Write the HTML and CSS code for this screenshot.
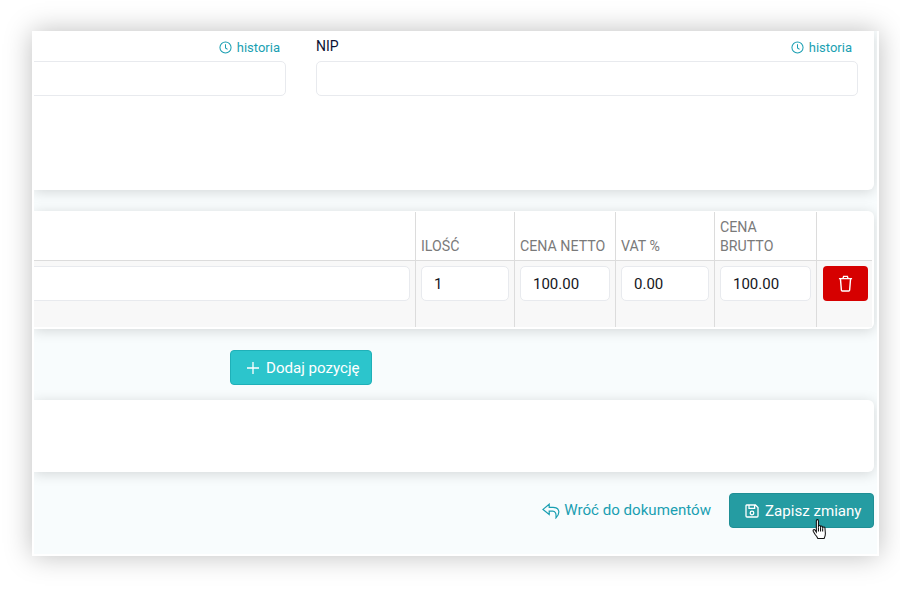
FILE: index.html
```html
<!DOCTYPE html>
<html lang="pl">
<head>
    <meta charset="UTF-8">
    <meta name="viewport" content="width=device-width, initial-scale=1.0">
    <title>Edycja dokumentu</title>
    <link rel="stylesheet" href="styles.css">
</head>
<body>

    <div class="frame">
        <div class="content">

            <!-- Dane kontrahenta -->
            <div class="card card-top">
                <div class="field field-first">
                    <div class="field-head">
                        <span class="field-label"></span>
                        <a class="history-link" href="#">
                            <svg class="history-icon" viewBox="0 0 14 14"><circle cx="7" cy="7" r="6"/><path d="M7 3.4V7.4L9.2 9"/></svg>
                            historia
                        </a>
                    </div>
                    <input class="text-input input-cut" type="text">
                </div>
                <div class="field field-nip">
                    <div class="field-head">
                        <span class="field-label">NIP</span>
                        <a class="history-link" href="#">
                            <svg class="history-icon" viewBox="0 0 14 14"><circle cx="7" cy="7" r="6"/><path d="M7 3.4V7.4L9.2 9"/></svg>
                            historia
                        </a>
                    </div>
                    <input class="text-input" type="text">
                </div>
            </div>

            <!-- Pozycje -->
            <div class="card card-table">
                <table class="items">
                    <colgroup>
                        <col class="col-name">
                        <col class="col-qty">
                        <col class="col-net">
                        <col class="col-vat">
                        <col class="col-gross">
                        <col class="col-action">
                    </colgroup>
                    <thead>
                        <tr>
                            <th></th>
                            <th>Ilość</th>
                            <th>Cena netto</th>
                            <th>VAT %</th>
                            <th>Cena brutto</th>
                            <th></th>
                        </tr>
                    </thead>
                    <tbody>
                        <tr>
                            <td><input class="text-input input-cut" type="text"></td>
                            <td><input class="text-input" type="text" value="1"></td>
                            <td><input class="text-input" type="text" value="100.00"></td>
                            <td><input class="text-input" type="text" value="0.00"></td>
                            <td><input class="text-input" type="text" value="100.00"></td>
                            <td>
                                <button class="btn-delete" aria-label="Usuń">
                                    <svg viewBox="0 0 16 18"><path d="M1 3.8H15M2.6 3.8L3.6 16.2Q3.7 17 4.5 17H11.5Q12.3 17 12.4 16.2L13.4 3.8M5.2 3.8L6 1.4H10L10.8 3.8"/></svg>
                                </button>
                            </td>
                        </tr>
                    </tbody>
                </table>
            </div>

            <div class="add-row">
                <button class="btn btn-add">
                    <svg class="btn-icon" viewBox="0 0 14 14"><path d="M7 1V13M1 7H13"/></svg>
                    Dodaj pozycję
                </button>
            </div>

            <div class="card card-notes"></div>

            <!-- Akcje -->
            <div class="actions">
                <a class="back-link" href="#">
                    <svg class="back-icon" viewBox="0 0 18 16"><path d="M7.2 1.2L1 6.4L7.2 11.4V8.2H10.6Q14.6 8.2 14 14.8Q17.2 11.6 16.8 8.4Q16.2 4.4 11 4.4H7.2Z"/></svg>
                    <span class="back-text">Wróć do dokumentów</span>
                </a>
                <button class="btn btn-save">
                    <svg class="btn-icon" viewBox="0 0 14 14"><path d="M1.6 1H10.4L13 3.6V12Q13 13 12 13H2Q1 13 1 12V1.6Q1 1 1.6 1ZM4 1V4.4H9.6V1"/><circle cx="7" cy="9" r="1.8"/></svg>
                    Zapisz zmiany
                    <svg class="cursor-hand" viewBox="0 0 14 20"><path d="M4 1.6Q4 .6 5 .6T6 1.6V8L6.2 6.6Q6.6 6 7.3 6.2T8 7.2V8.4L8.2 7.2Q8.6 6.6 9.3 6.8T10 7.8V9L10.2 8Q10.6 7.4 11.4 7.6T12.2 8.6L12.6 14Q12.6 16 11.4 18.6H5.4Q4.6 16.6 3 15L1 11.6Q.6 10.6 1.4 10.2T2.8 10.6L4 12.4Z"/><path class="hand-lines" d="M6 8V12M8 8.4V12M10 9V12"/></svg>
                </button>
            </div>

        </div>
    </div>

</body>
</html>
```

FILE: styles.css
```css
/* --- Base --- */
html, body {
    height: 600px;
}

body {
    margin: 0;
    background-color: #fff;
    font-family: 'Roboto', sans-serif;
    overflow: hidden;
}

/* --- Frame --- */
.frame {
    width: 847px;
    height: 525px;
    margin: 31px 0 0 32px;
    box-sizing: border-box;
    border: 2px solid #fff;
    border-top: 0;
    box-shadow: 0 0 26px rgba(0, 0, 0, 0.26);
}

.content {
    height: 100%;
    overflow: hidden;
    background-color: #f8fcfd;
}

/* --- Cards --- */
.card {
    width: 840px;
    box-sizing: border-box;
    background-color: #fff;
    border-radius: 0 6px 6px 0;
    box-shadow: 0 2px 13px rgba(0, 0, 0, 0.15);
}

.card-top {
    display: flex;
    gap: 30px;
    height: 159px;
    padding-right: 16px;
    border-radius: 0 0 6px 0;
}

.card-table {
    margin-top: 21px;
    padding: 1px 2px 2px 0;
}

.card-notes {
    height: 72px;
    margin-top: 15px;
}

/* --- Fields --- */
.field-first {
    width: 252px;
}

.field-nip {
    flex: 1;
}

.field-head {
    display: flex;
    align-items: center;
    justify-content: space-between;
    height: 30px;
    padding-right: 6px;
}

.field-label {
    font-size: 14px;
    color: #0b1233;
}

.history-link {
    display: flex;
    align-items: center;
    gap: 5px;
    font-size: 13px;
    color: #1a9fb2;
    text-decoration: none;
    margin-top: 3px;
}

.history-icon {
    width: 13px;
    height: 13px;
    fill: none;
    stroke: #1a9fb2;
    stroke-width: 1.1;
}

.text-input {
    display: block;
    width: 100%;
    height: 35px;
    box-sizing: border-box;
    padding: 0 12px;
    background-color: #fff;
    border: 1px solid #e8eaee;
    border-radius: 5px;
    font-family: inherit;
    font-size: 15px;
    color: #14161c;
}

/* first column runs off the left edge of the frame */
.input-cut {
    width: calc(100% + 20px);
    margin-left: -20px;
}

/* --- Table --- */
.items {
    width: 838px;
    border-collapse: separate;
    border-spacing: 0;
    table-layout: fixed;
}

.col-name { width: 382px; }
.col-qty { width: 99px; }
.col-net { width: 101px; }
.col-vat { width: 99px; }
.col-gross { width: 102px; }
.col-action { width: 55px; }

.items th {
    height: 49px;
    box-sizing: border-box;
    padding: 5px 5px 4px 5px;
    border-right: 1px solid #dcdcdc;
    border-bottom: 1px solid #dcdcdc;
    vertical-align: bottom;
    text-align: left;
    font-size: 14.2px;
    font-weight: 400;
    line-height: 19px;
    text-transform: uppercase;
    color: #7a7a7a;
}

.items td {
    height: 66px;
    box-sizing: border-box;
    padding: 5px;
    background-color: #f8f8f8;
    border-right: 1px solid #dcdcdc;
    vertical-align: top;
}

.items th:last-child,
.items td:last-child {
    border-right: 0;
}

.items td:last-child {
    padding-left: 6px;
}

.btn-delete {
    display: flex;
    align-items: center;
    justify-content: center;
    width: 45px;
    height: 35px;
    padding: 0;
    background-color: #d60000;
    border: 0;
    border-radius: 4px;
}

.btn-delete svg {
    width: 15px;
    height: 17px;
    fill: none;
    stroke: #fff;
    stroke-width: 1.5;
}

/* --- Buttons --- */
.btn {
    display: flex;
    align-items: center;
    height: 35px;
    box-sizing: border-box;
    padding-bottom: 1px;
    border-radius: 4px;
    font-family: inherit;
    font-size: 15.1px;
    font-weight: 400;
    color: #fff;
}

.btn-icon {
    width: 14px;
    height: 14px;
    fill: none;
    stroke: #fff;
    stroke-width: 1.3;
}

.add-row {
    padding: 21px 0 0 196px;
}

.btn-add {
    width: 142px;
    padding-left: 15px;
    gap: 6px;
    background-color: #2cc5cc;
    border: 1px solid #1fb0b8;
}

.btn-save {
    position: relative;
    width: 145px;
    padding-left: 15px;
    gap: 6px;
    background-color: #259ca2;
    border: 1px solid #1f8f95;
}

/* --- Footer actions --- */
.actions {
    display: flex;
    align-items: center;
    justify-content: flex-end;
    gap: 18px;
    padding: 21px 3px 0 0;
}

.back-link {
    display: flex;
    align-items: center;
    gap: 4px;
    font-size: 15.1px;
    color: #1a9fb2;
    text-decoration: none;
}

.back-text {
    margin-top: -2px;
}

.back-icon {
    width: 18px;
    height: 16px;
    fill: none;
    stroke: #1a9fb2;
    stroke-width: 1.2;
}

/* Mouse pointer resting on the save button */
.cursor-hand {
    position: absolute;
    left: 82px;
    top: 25px;
    width: 15px;
    height: 21px;
    fill: #fff;
    stroke: #111;
    stroke-width: 1;
}

.hand-lines {
    fill: none;
}
```
